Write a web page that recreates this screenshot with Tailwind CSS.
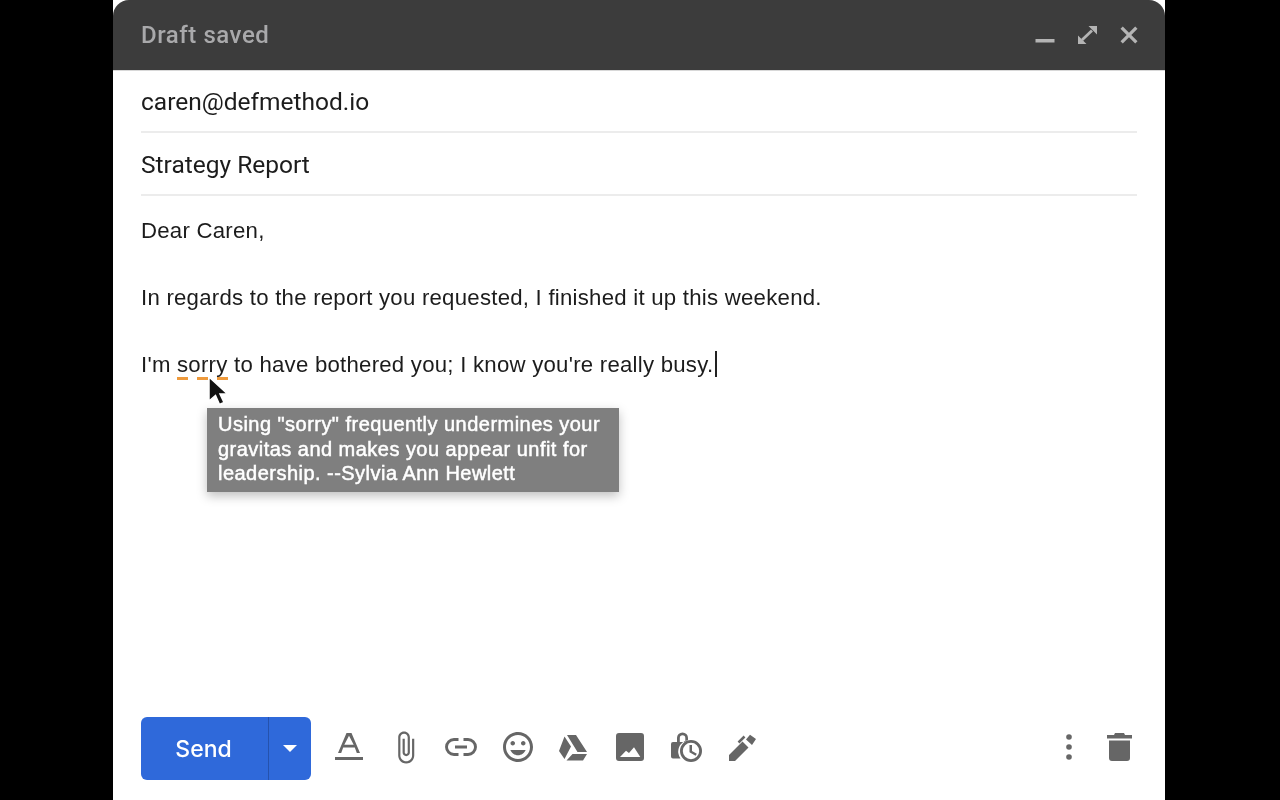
<!DOCTYPE html>
<html>
<head>
<meta charset="utf-8">
<script src="https://cdn.jsdelivr.net/npm/@tailwindcss/browser@4"></script>
</head>
<body class="bg-black">
<div class="w-[1280px] h-[800px] overflow-hidden bg-black pl-[113px]">
  <main class="relative w-[1052px] h-[800px] bg-white flex flex-col font-['Liberation_Sans',sans-serif] text-[#1c1c1c] blur-[0.4px]">
    <header class="h-[71px] shrink-0 bg-[#3c3c3c] rounded-t-[16px] flex items-center justify-between pl-[28px] pr-[20px] border-b border-[#d8d8d8]">
      <span class="font-['Roboto',sans-serif] font-medium text-[24px] text-[#a9a9ab] tracking-[0.55px]">Draft saved</span>
      <div class="flex items-center gap-[10px] text-[#b4b4b4]">
        <svg class="w-[32px] h-[32px]" viewBox="0 0 32 32" fill="currentColor"><rect x="6.500" y="20" width="19" height="3.500"/></svg>
        <svg class="w-[32px] h-[32px]" viewBox="0 0 32 32" fill="currentColor"><path d="M17.500 7h8.500v8.500zM7 16.500V25h8.500z"/><path d="M21 11.500l-10 9.500" fill="none" stroke="currentColor" stroke-width="2.800"/></svg>
        <svg class="w-[32px] h-[32px]" viewBox="0 0 32 32" fill="currentColor"><path d="M9.800 7.500l6.200 6.200 6.200-6.200 2.300 2.300-6.200 6.200 6.200 6.200-2.300 2.300-6.200-6.200-6.200 6.200-2.300-2.300 6.200-6.200-6.200-6.200z"/></svg>
      </div>
    </header>
    <div class="mx-[28px] h-[62px] shrink-0 flex items-center border-b-2 border-[#ececec] font-['Roboto',sans-serif] text-[24.500px] pt-[2px]">caren@defmethod.io</div>
    <div class="mx-[28px] h-[63px] shrink-0 flex items-center border-b-2 border-[#ececec] font-['Roboto',sans-serif] text-[24.500px] pt-[4px]">Strategy Report</div>
    <section class="relative flex-1 px-[28px] pt-[18px] text-[22.200px] tracking-[0.245px] leading-[33.500px]">
      <p>Dear Caren,</p>
      <p class="mt-[33.500px]">In regards to the report you requested, I finished it up this weekend.</p>
      <p class="mt-[33.500px] relative">I'm <span class="relative">sorry<span class="absolute left-0 right-0 bottom-[-3px] flex justify-between"><i class="block w-[10.500px] h-[3px] bg-[#ee9a3c]"></i><i class="block w-[10.500px] h-[3px] bg-[#ee9a3c]"></i><i class="block w-[10.500px] h-[3px] bg-[#ee9a3c]"></i></span></span> to have bothered you; I know you're really busy.<span class="inline-block w-[1.500px] h-[26px] ml-[2px] bg-[#222] align-[-5px]"></span></p>
      <div class="absolute left-[94px] top-[212px] w-[412px] h-[84px] bg-[#7f7f7f] text-white shadow-[0_4px_10px_rgba(0,0,0,0.25)] pl-[11px] pt-[4px] text-[20px] tracking-[0.47px] leading-[24.500px] [-webkit-text-stroke:0.5px_#fff]">Using "sorry" frequently undermines your<br>gravitas and makes you appear unfit for<br>leadership. --Sylvia Ann Hewlett</div>
      <svg class="absolute left-[94px] top-[180px] w-[20px] h-[30px]" viewBox="0 0 20 30"><path d="M2 1v24l6.500-5.500 4 9 4.500-2-4-8.500h7.500z" fill="#111" stroke="#fff" stroke-width="1.500"/></svg>
    </section>
    <footer class="h-[83px] pb-[20px] shrink-0 px-[28px] flex items-center text-[#666]">
      <div class="w-[170px] h-[63px] rounded-[6px] bg-[#2f69da] text-white flex">
        <div class="w-[128px] border-r border-[#2552ad] flex items-center justify-center font-['Inter',sans-serif] font-medium text-[23px] pr-[2px] pt-[2px]">Send</div>
        <div class="flex-1 flex items-center justify-center"><svg class="w-[14px] h-[7px]" viewBox="0 0 14 7" fill="currentColor"><path d="M0 0h14L7 7z"/></svg></div>
      </div>
      <div class="ml-[10px] flex items-center mb-[3px]">
        <span class="w-[56px] flex justify-center"><svg class="w-[32px] h-[32px]" viewBox="0 0 32 32" fill="currentColor"><path fill-rule="evenodd" d="M13.500 2h5L27 22h-3.200l-2-5.500H10.200L8.200 22H5zM11.300 13.800h9.400L16 4.800z"/><rect x="2" y="26" width="28" height="3"/></svg></span>
        <span class="w-[56px] flex justify-center"><svg class="w-[35px] h-[35px] ml-[1px]" viewBox="0 0 24 24" fill="currentColor"><path d="M16.500 6v11.500c0 2.210-1.790 4-4 4s-4-1.790-4-4V5c0-1.380 1.120-2.500 2.500-2.500s2.500 1.120 2.500 2.500v10.500c0 .55-.45 1-1 1s-1-.45-1-1V6H10v9.500c0 1.380 1.120 2.500 2.500 2.500s2.500-1.120 2.500-2.500V5c0-2.210-1.790-4-4-4S7 2.790 7 5v12.500c0 3.040 2.460 5.500 5.500 5.500s5.500-2.460 5.500-5.500V6h-1.500z"/></svg></span>
        <span class="w-[56px] flex justify-center"><svg class="w-[32px] h-[20px]" viewBox="0 0 32 20" fill="none" stroke="currentColor" stroke-width="2.900"><path d="M13.500 2.500H9a7.500 7.500 0 0 0 0 15h4.500M18.500 2.500H23a7.500 7.500 0 0 1 0 15h-4.500M10 10h12"/></svg></span>
        <span class="w-[56px] flex justify-center"><svg class="w-[36px] h-[36px] ml-[2px]" viewBox="0 0 24 24" fill="currentColor"><path d="M11.990 2C6.470 2 2 6.480 2 12s4.470 10 9.990 10C17.520 22 22 17.520 22 12S17.520 2 11.990 2zM12 20c-4.420 0-8-3.580-8-8s3.580-8 8-8 8 3.580 8 8-3.580 8-8 8zm3.500-9c.83 0 1.500-.67 1.500-1.500S16.330 8 15.500 8 14 8.670 14 9.500s.67 1.500 1.500 1.500zm-7 0c.83 0 1.500-.67 1.500-1.500S9.330 8 8.500 8 7 8.670 7 9.500 7.670 11 8.500 11zm3.500 6.500c2.330 0 4.310-1.460 5.110-3.500H6.890c.8 2.040 2.780 3.500 5.110 3.500z"/></svg></span>
        <span class="w-[56px] flex justify-center"><svg class="w-[28px] h-[27px]" viewBox="0 0 28 27" fill="currentColor"><path d="M5.500 2.500L12 12.500 5.500 25 0 17zM8 1h9L28 18h-9.500zM13.500 20H28l-4 6.500H7.500z"/></svg></span>
        <span class="w-[56px] flex justify-center"><svg class="w-[28px] h-[28px] ml-[2px]" viewBox="0 0 28 28" fill="currentColor"><path fill-rule="evenodd" d="M3 0h22a3 3 0 0 1 3 3v22a3 3 0 0 1-3 3H3a3 3 0 0 1-3-3V3a3 3 0 0 1 3-3zM4 24h20.300L18 14.300l-5 5.700-3-2.300z"/></svg></span>
        <span class="w-[56px] flex justify-center"><svg class="w-[32px] h-[32px] ml-[4px]" viewBox="0 0 32 32" fill="currentColor"><path d="M0 13a2 2 0 0 1 2-2h4V7a5.500 5.500 0 0 1 11 0v2.200a11.500 11.500 0 0 0-7.500 18.300H2a2 2 0 0 1-2-2zM8.800 11h5.500V7a2.750 2.750 0 0 0-5.500 0z" fill-rule="evenodd"/><path fill-rule="evenodd" d="M20 9a11 11 0 1 1 0 22 11 11 0 0 1 0-22zm0 2.800a8.200 8.200 0 1 0 0 16.400 8.200 8.200 0 0 0 0-16.400zM18.500 14h2.500v6l4.800 2.800-1.200 2-6.100-3.600z"/></svg></span>
        <span class="w-[56px] flex justify-center"><svg class="w-[27px] h-[27px] ml-[2px]" viewBox="0 0 27 27" fill="currentColor"><path d="M0 27v-6L13.500 7.500l6 6L6 27zM17 5.500L21 .8 27 5l-4 6z"/><path d="M9.500 8.500l6-6" stroke="currentColor" stroke-width="2.500"/></svg></span>
      </div>
      <div class="ml-auto flex items-center mb-[3px]">
        <svg class="w-[10px] h-[28px] mr-[33px]" viewBox="0 0 10 28" fill="#666"><circle cx="5" cy="4" r="2.800"/><circle cx="5" cy="14" r="2.800"/><circle cx="5" cy="24" r="2.800"/></svg>
        <svg class="w-[25px] h-[28px] mr-[5px]" viewBox="0 0 25 28" fill="currentColor"><path d="M8 0h9l1 2H7zM0 2h25v3.500H0zM2 7.500h21V25a3 3 0 0 1-3 3H5a3 3 0 0 1-3-3z"/></svg>
      </div>
    </footer>
  </main>
</div>
</body>
</html>
